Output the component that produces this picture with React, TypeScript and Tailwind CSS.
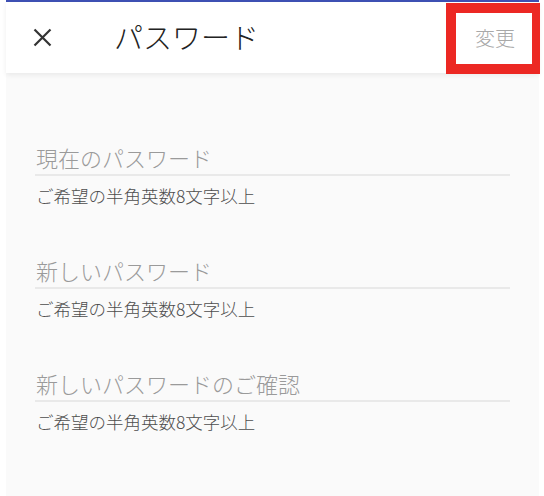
import React from "react";

const font = { fontFamily: '"Noto Sans CJK JP", "Noto Sans", Roboto, sans-serif' };

function Field({ label }: { label: string }) {
  return (
    <div className="flex flex-col">
      <div className="border-b-2 border-[#e9e9e9] pb-[6px] pl-[1px]">
        <div className="text-[22px] font-light leading-[22px] text-[#9a9a9a]">{label}</div>
      </div>
      <div className="mt-[11px] pl-[1px] text-[17.5px] font-light leading-[18px] text-[#4d4d4d]">
        ご希望の半角英数8文字以上
      </div>
    </div>
  );
}

export default function App() {
  return (
    <div className="relative h-[496px] w-[544px] overflow-hidden bg-white" style={font}>
      <div className="ml-[6px] flex h-full w-[533px] flex-col bg-[#fafafa]">
        <div className="h-[2px] bg-[#3f51b5]" />
        <div className="relative z-10 flex h-[71px] items-center bg-white shadow-[0_2px_5px_rgba(0,0,0,0.07)]">
          <svg
            className="ml-[27px]"
            width="19"
            height="19"
            viewBox="0 0 19 19"
            fill="none"
            stroke="#333333"
            strokeWidth="2.2"
            strokeLinecap="butt"
          >
            <path d="M1.5 1.5 L17.5 17.5 M17.5 1.5 L1.5 17.5" />
          </svg>
          <div className="ml-[62px] mb-[2px] text-[29px] font-light leading-[29px] text-[#222222]">パスワード</div>
          <div className="ml-auto mr-[24px] text-[20px] font-light leading-[20px] text-[#a8a8a8]">変更</div>
        </div>
        <div className="flex flex-col gap-[54px] px-[29px] pt-[73px]">
          <Field label="現在のパスワード" />
          <Field label="新しいパスワード" />
          <Field label="新しいパスワードのご確認" />
        </div>
      </div>
      <div className="absolute left-[446px] top-[3px] z-20 h-[71px] w-[94px] border-[10px] border-r-[8px] border-[#ec2823]" />
    </div>
  );
}
